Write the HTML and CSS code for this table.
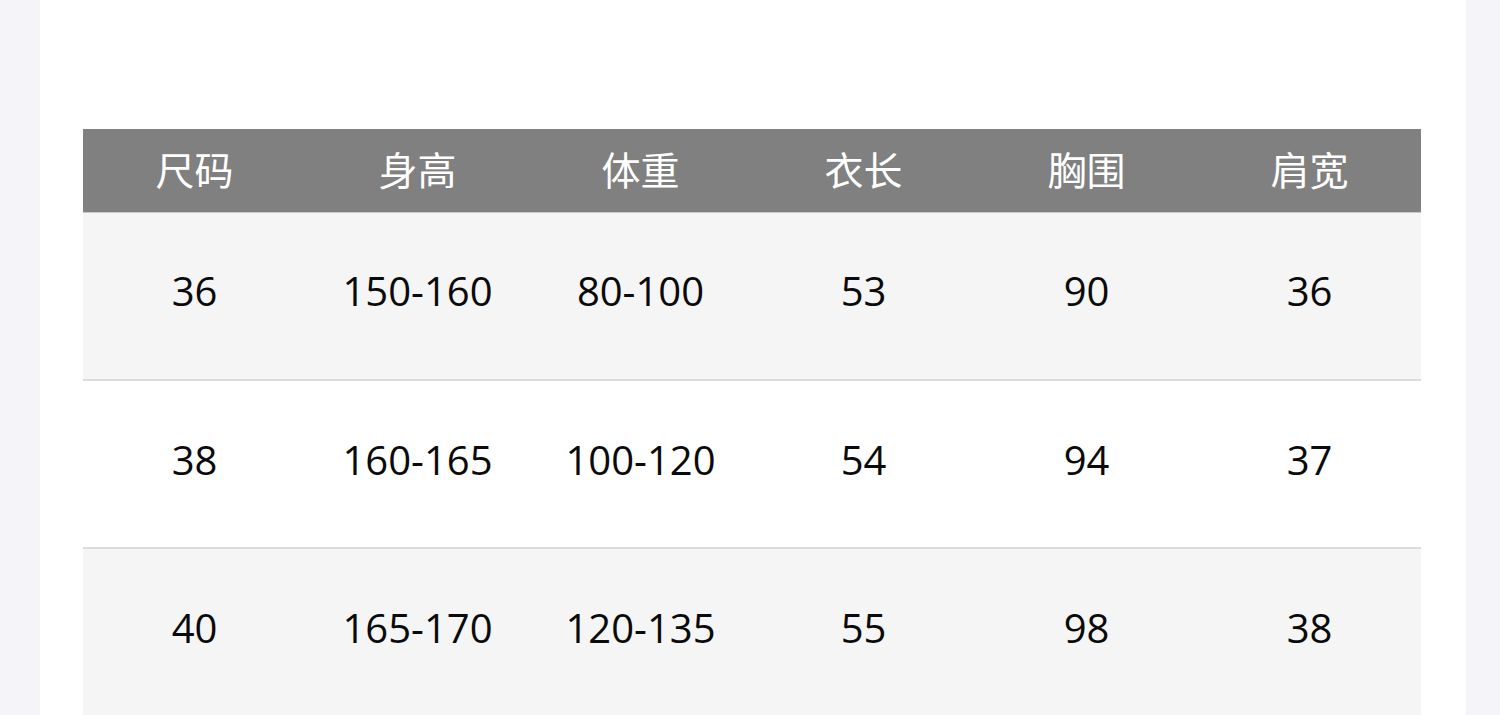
FILE: index.html
```html
<!DOCTYPE html>
<html lang="zh">
<head>
<meta charset="utf-8">
<link rel="stylesheet" href="styles.css">
</head>
<body>
<div class="page">
  <table class="size-table">
    <thead>
      <tr><th>尺码</th><th>身高</th><th>体重</th><th>衣长</th><th>胸围</th><th>肩宽</th></tr>
    </thead>
    <tbody>
      <tr><td>36</td><td>150-160</td><td>80-100</td><td>53</td><td>90</td><td>36</td></tr>
      <tr><td>38</td><td>160-165</td><td>100-120</td><td>54</td><td>94</td><td>37</td></tr>
      <tr><td>40</td><td>165-170</td><td>120-135</td><td>55</td><td>98</td><td>38</td></tr>
    </tbody>
  </table>
</div>
</body>
</html>
```
FILE: styles.css
```css
html, body { margin: 0; padding: 0; }
body {
  background: #f4f4f9;
  font-family: "Open Sans", "Noto Sans CJK SC", sans-serif;
  height: 715px;
  overflow: hidden;
}
.page {
  width: 1426px;
  margin-left: 40px;
  background: #fff;
  min-height: 715px;
  padding: 129px 45px 0 43px;
  box-sizing: border-box;
}
.size-table {
  width: 1338px;
  border-collapse: collapse;
  table-layout: fixed;
}
.size-table th {
  background: #808080;
  color: #fff;
  font-family: "Noto Sans CJK SC", sans-serif;
  font-weight: 400;
  font-size: 39px;
  height: 83px;
  padding: 0 0 4px;
  box-sizing: border-box;
  border-bottom: 1px solid #c8c8c8;
}
.size-table td {
  text-align: center;
  font-size: 40px;
  color: #0a0a0a;
  height: 168px;
  padding: 0 0 10px;
  box-sizing: border-box;
  border-bottom: 2px solid #dcdcdc;
}
.size-table tbody tr:nth-child(odd) td { background: #f5f5f5; }
.size-table tbody tr:nth-child(even) td { background: #fff; }
```
